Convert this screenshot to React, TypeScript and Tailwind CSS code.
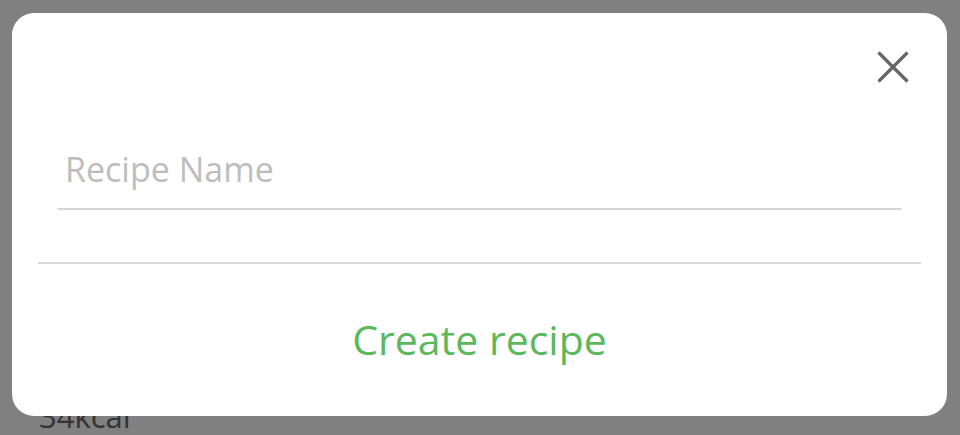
import React, { useState } from 'react';

export default function App() {
  const [name, setName] = useState('');

  return (
    <div className="relative w-[960px] h-[435px] overflow-hidden bg-[#808080] font-['Open_Sans',sans-serif]">
      {/* page content under the overlay */}
      <div className="pl-[39px] pt-[399px] text-[31px] leading-[34px] text-[#333]">34kcal</div>

      {/* modal */}
      <div className="absolute left-[12px] top-[13px] w-[935px] h-[403px] bg-white rounded-[22px] flex flex-col">
        <div className="flex justify-end pt-[38px] pr-[38px]">
          <button className="w-[32px] h-[32px] text-[#666]" aria-label="Close">
            <svg viewBox="0 0 32 32" width="32" height="32" fill="none" stroke="currentColor" strokeWidth="3.2">
              <path d="M1.5 1.5 L30.5 30.5 M30.5 1.5 L1.5 30.5" />
            </svg>
          </button>
        </div>

        <div className="mx-[45px] mt-[69px]">
          <input
            value={name}
            onChange={e => setName(e.target.value)}
            placeholder="Recipe Name"
            className="w-full px-[8px] pb-[21px] text-[34px] leading-[35px] text-[#333] placeholder:text-[#bdbdbd] border-b-2 border-[#d6d6d6] rounded-b-[2px] outline-none"
          />
        </div>

        <div className="mx-[26px] mt-[52px] h-[2px] bg-[#d9d9d9]" />

        <button className="flex-1 flex items-center justify-center text-[41px] text-[#5cb85c]">
          Create recipe
        </button>
      </div>
    </div>
  );
}
